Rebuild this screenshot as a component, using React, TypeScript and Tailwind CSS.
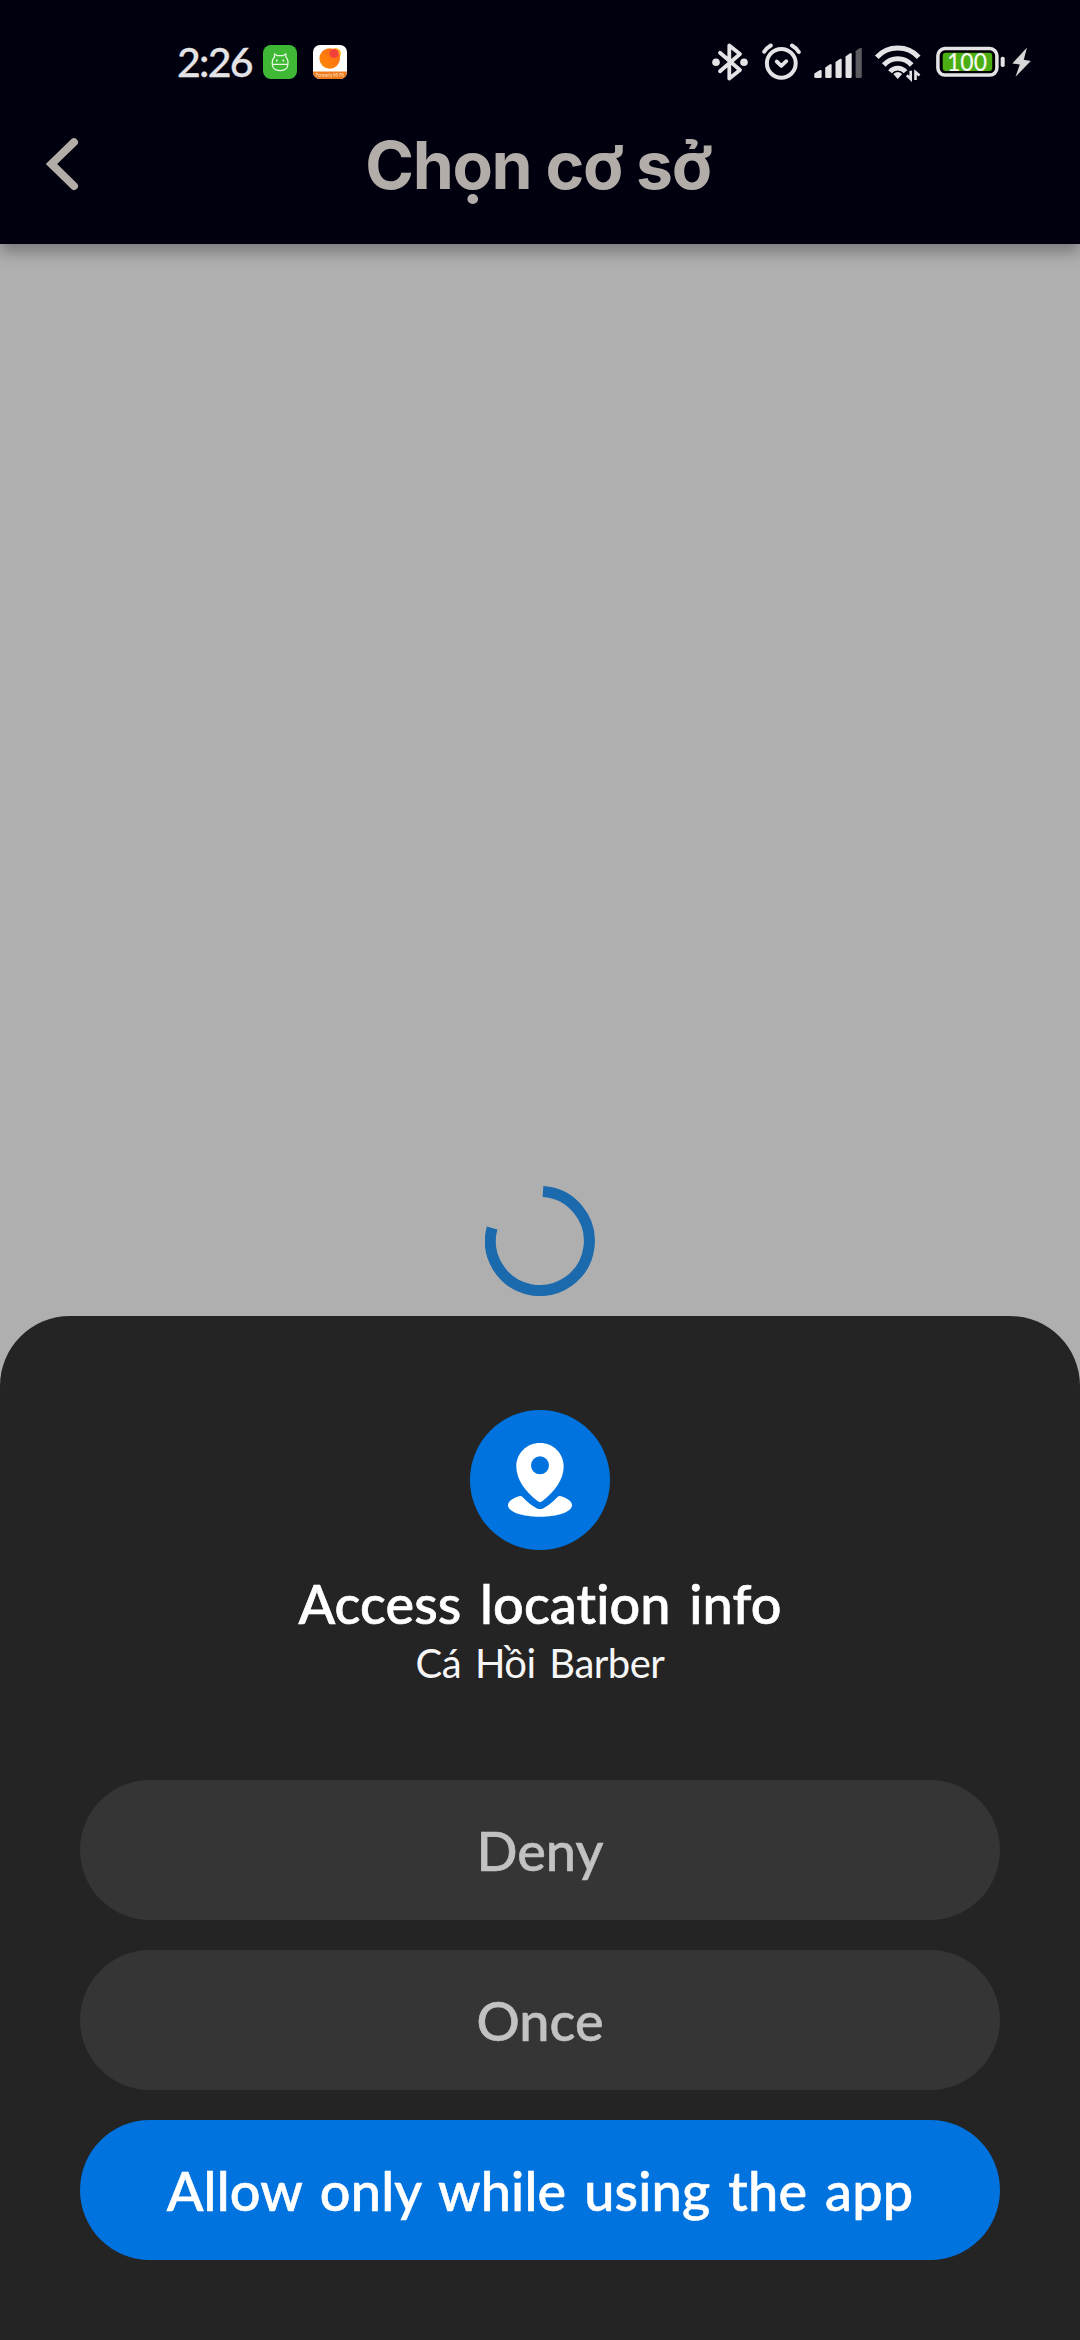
import type { ReactNode } from "react";

const INK = "#e4e4e6";

function MitalkIcon() {
  return (
    <svg className="ml-1 h-[34px] w-[34px] shrink-0" viewBox="0 0 34 34" fill="none">
      <rect width="34" height="34" rx="8" fill="#3fb835" />
      <path
        d="M9.300 19.300H24.900Q24.800 25.600 17.200 25.600Q9.400 25.600 9.300 19.300C9 15.500 9.800 13.500 11.500 12V8.800L14 10.600H20.400L22.900 8.800V12C24.600 13.500 25.300 15.500 24.900 19.300"
        stroke="#e9f8e4"
        strokeWidth="1.200"
        strokeLinejoin="round"
      />
      <path d="M13.800 14.600v2M20.300 14.600v2" stroke="#e9f8e4" strokeWidth="1.600" />
    </svg>
  );
}

function FitIcon() {
  return (
    <svg className="ml-4 h-[34px] w-[34px] overflow-visible" viewBox="0 0 34 34">
      <defs>
        <clipPath id="fit-tile">
          <rect width="34" height="34" rx="7" />
        </clipPath>
        <linearGradient id="fit-ball" x1="0" y1="1" x2="1" y2="0">
          <stop offset="0" stopColor="#ff8a00" />
          <stop offset="1" stopColor="#fb6a1c" />
        </linearGradient>
      </defs>
      <g clipPath="url(#fit-tile)">
        <rect width="34" height="34" fill="#fff" />
        <circle cx="22.500" cy="8.500" r="5.500" fill="#ffb02e" />
        <circle cx="16.700" cy="13.500" r="10.300" fill="url(#fit-ball)" />
        <circle cx="21" cy="8.500" r="4.600" fill="#f4403a" />
        <rect y="26.500" width="34" height="8" fill="#ee7a1c" />
      </g>
      <text x="17" y="31.800" textAnchor="middle" fontSize="4.800" textLength="28" lengthAdjust="spacingAndGlyphs" fill="#ffe6cc" fontFamily="Lato, sans-serif">
        Formerly Mi Fit
      </text>
    </svg>
  );
}

function BluetoothIcon() {
  return (
    <svg className="h-10 w-9" viewBox="0 0 36 40" fill="none">
      <path d="M8 10.700L28 28L17.300 36.500V3.500L28 12L8 29.300" stroke={INK} strokeWidth="3.800" strokeLinecap="round" strokeLinejoin="round" />
      <circle cx="4" cy="20.300" r="3.800" fill={INK} />
      <circle cx="32" cy="20.300" r="3.800" fill={INK} />
    </svg>
  );
}

function AlarmIcon() {
  return (
    <svg className="ml-[13px] h-10 w-10" viewBox="0 0 40 40" fill="none" stroke={INK} strokeLinecap="round" strokeLinejoin="round">
      <circle cx="20.300" cy="21.300" r="14.400" strokeWidth="4" />
      <path d="M15.700 19.500l4.600 4.300l5-4.600" strokeWidth="3.800" />
      <path d="M3.200 9.700Q5.500 6 9.800 3.500M31 3.500Q35.300 6 37.800 10" strokeWidth="4" />
    </svg>
  );
}

function SignalIcon() {
  return (
    <svg className="ml-[13px] h-10 w-12" viewBox="0 0 48 40" fill={INK}>
      <path d="M.3 31.500L5.500 28.300Q7.700 27.500 7.700 29V34.500Q7.700 36 6.200 36H1.800Q.3 36 .3 34.500Z" />
      <path d="M11.200 25.500L15.700 22.400Q17.600 21.500 17.600 23.200V34.500Q17.600 36 16.200 36H12.600Q11.200 36 11.200 34.500Z" />
      <path d="M21.500 20L25.800 17Q27.700 16 27.700 18V34.500Q27.700 36 26.300 36H22.900Q21.500 36 21.500 34.500Z" />
      <path d="M31.500 14.500L35.800 11.400Q37.700 10.500 37.700 12.500V34.500Q37.700 36 36.300 36H32.900Q31.500 36 31.500 34.500Z" />
      <path fill="#5a5a60" d="M41.600 9L45.900 6Q47.800 5 47.800 7V34.500Q47.800 36 46.400 36H43Q41.600 36 41.600 34.500Z" />
    </svg>
  );
}

function WifiIcon() {
  return (
    <svg className="ml-3 h-10 w-12" viewBox="0 0 48 40" fill="none" stroke={INK}>
      <path d="M2.800 15.300A28.500 28.500 0 0 1 44.700 15.300" strokeWidth="5" />
      <path d="M9.800 23A18.500 18.500 0 0 1 37.700 23" strokeWidth="5" />
      <path d="M16 29.800A10 10 0 0 1 31.500 29.800" strokeWidth="4.800" />
      <path d="M19.300 32Q23.700 28 28.200 32L23.700 37Z" fill={INK} stroke="none" />
      <path d="M36.700 28.700V37L32.800 33.300M41.500 38V30L45.500 33.500" strokeWidth="2.600" />
    </svg>
  );
}

function BatteryIcon() {
  return (
    <svg className="ml-[14px] h-10 w-[70px]" viewBox="0 0 70 40">
      <rect x="1.900" y="6.600" width="59" height="26.500" rx="7" fill="#000005" stroke={INK} strokeWidth="3.500" />
      <rect x="6.700" y="10.700" width="49.500" height="18.300" rx="3" fill="#4bae12" />
      <rect x="64.700" y="14.800" width="4" height="10.200" rx="1.800" fill={INK} />
      <text x="31" y="28.600" textAnchor="middle" fontSize="24.500" fontWeight="500" textLength="40" lengthAdjust="spacingAndGlyphs" fill="#f3f8ee" fontFamily="Lato, sans-serif">
        100
      </text>
    </svg>
  );
}

function BoltIcon() {
  return (
    <svg className="ml-[6px] h-10 w-5" viewBox="0 0 20 40" fill="#d6d6d8">
      <path d="M15 5.500L.3 21.500L7.800 22.500L3.500 34.700L18.800 19L11.800 17.800Z" />
    </svg>
  );
}

function StatusBar() {
  return (
    <div className="flex h-[124px] items-start justify-between pr-12 pl-[177px] text-[#e4e4e6]">
      <div className="flex h-[124px] items-center">
        <span className="w-[82px] shrink-0 text-[41px] leading-[60px] font-medium tracking-[-1.7px] whitespace-nowrap [-webkit-text-stroke:0.3px_#e4e4e6]">
          2:26
        </span>
        <MitalkIcon />
        <FitIcon />
      </div>
      <div className="flex h-[124px] items-center">
        <BluetoothIcon />
        <AlarmIcon />
        <SignalIcon />
        <WifiIcon />
        <BatteryIcon />
        <BoltIcon />
      </div>
    </div>
  );
}

function AppBar() {
  return (
    <div className="grid h-[120px] grid-cols-[120px_1fr_120px]">
      <button type="button" aria-label="Back" className="flex items-start pt-[10px] pl-11">
        <svg className="h-[60px] w-9" viewBox="0 0 36 60" fill="none">
          <path d="M30 8.200L7.500 30L30 52" stroke="#b2ada8" strokeWidth="8" strokeLinecap="round" />
        </svg>
      </button>
      <h1 className="pt-[1px] pr-1 text-center font-['Inter'] text-[66px] leading-[80px] font-bold tracking-[-1.4px] whitespace-nowrap text-[#b2ada8]">
        Chọn cơ sở
      </h1>
    </div>
  );
}

function Spinner() {
  return (
    <svg className="h-[110px] w-[110px]" viewBox="0 0 110 110" fill="none">
      <path d="M58 5.600A49.500 49.500 0 1 1 7.100 42" stroke="#1a6aad" strokeWidth="11" />
    </svg>
  );
}

function LocationBadge() {
  return (
    <svg className="h-[140px] w-[140px]" viewBox="0 0 140 140" fill="#fff">
      <circle cx="70" cy="70" r="70" fill="#0073de" />
      <path fillRule="evenodd" d="M70 33C56.500 33 46.300 43.500 46.300 56.500C46.300 69.500 56 82.500 67.500 91Q70 93 72.500 91C84 82.500 93.700 69.500 93.700 56.500C93.700 43.500 83.500 33 70 33ZM70 46.300A9 9 0 1 1 70 64.300A9 9 0 1 1 70 46.300Z" />
      <path d="M49 86.300Q51 85.500 52.500 87Q60 95 67 98.400Q70 99.800 73 98.400Q80 95 87.500 87Q89 85.500 91 86.300C97.500 88.500 102 91.500 102 95C102 102 88 106.700 70 106.700S38 102 38 95C38 91.500 42.500 88.500 49 86.300Z" />
    </svg>
  );
}

function SheetButton({ className, children }: { className: string; children: ReactNode }) {
  return (
    <button
      type="button"
      className={`flex h-[140px] w-full items-center justify-center rounded-[70px] pt-[2px] text-[54px] leading-[138px] whitespace-nowrap [-webkit-text-stroke:0.6px_currentColor] ${className}`}
    >
      {children}
    </button>
  );
}

function PermissionSheet() {
  return (
    <section className="mt-5 flex h-[1024px] flex-col items-center rounded-t-[70px] bg-[#242424] px-20 pt-[94px]">
      <LocationBadge />
      <h2 className="mt-[19px] h-[70px] text-[54px] leading-[70px] font-medium tracking-[0.1px] whitespace-nowrap text-white [word-spacing:5px] [-webkit-text-stroke:0.7px_currentColor]">
        Access location info
      </h2>
      <p className="h-[51px] text-[40px] leading-[49px] tracking-[-0.5px] whitespace-nowrap text-[#f6f6f6] [word-spacing:4px]">Cá Hồi Barber</p>
      <div className="mt-[90px] flex w-full flex-col gap-[30px]">
        <SheetButton className="bg-[#353535] font-medium text-[#c2c2c2]">Deny</SheetButton>
        <SheetButton className="bg-[#353535] font-medium text-[#c2c2c2]">Once</SheetButton>
        <SheetButton className="bg-[#0073de] font-medium tracking-[0.2px] text-white [word-spacing:4px]">Allow only while using the app</SheetButton>
      </div>
    </section>
  );
}

export default function App() {
  return (
    <div className="flex h-[2340px] w-[1080px] flex-col overflow-hidden bg-[#afafaf] font-['Lato',sans-serif]">
      <header className="h-[244px] shrink-0 bg-[#00000e] shadow-[0_8px_14px_rgba(0,0,0,0.3)]">
        <StatusBar />
        <AppBar />
      </header>
      <main className="flex flex-1 flex-col">
        <div className="flex h-[1052px] items-end justify-center">
          <Spinner />
        </div>
        <PermissionSheet />
      </main>
    </div>
  );
}
